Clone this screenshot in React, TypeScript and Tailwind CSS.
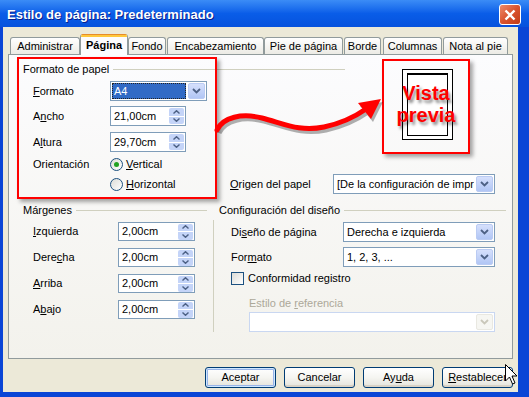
import React from "react";

type Tab = { label: string; cls: string; active?: boolean };

const tabs: Tab[] = [
  { label: "Administrar", cls: "w-[70px]" },
  { label: "Página", cls: "w-[48px]", active: true },
  { label: "Fondo", cls: "w-[38px]" },
  { label: "Encabezamiento", cls: "w-[97px] ml-[1px]" },
  { label: "Pie de página", cls: "w-[79px]" },
  { label: "Borde", cls: "w-[37px] ml-[1px]" },
  { label: "Columnas", cls: "w-[59px] ml-[2px]" },
  { label: "Nota al pie", cls: "w-[65px] ml-[1px]" },
];

const margins: React.ReactNode[] = [
  <>
    <u>I</u>zquierda
  </>,
  <>
    Dere<u>c</u>ha
  </>,
  <>
    <u>A</u>rriba
  </>,
  <>
    A<u>b</u>ajo
  </>,
];

const Chevron = ({ disabled }: { disabled?: boolean }) => (
  <svg width="9" height="6" viewBox="0 0 9 6">
    <path
      d="M1 1L4.5 4.5L8 1"
      fill="none"
      stroke={disabled ? "#C9C7BA" : "#4D6185"}
      strokeWidth="1.8"
    />
  </svg>
);

const DropButton = ({ disabled }: { disabled?: boolean }) => (
  <div
    className={
      disabled
        ? "w-[17px] h-[16px] rounded-[2px] border border-[#E9E8E1] bg-[#F6F6F2] flex items-center justify-center"
        : "w-[17px] h-[16px] rounded-[2px] border border-[#BACBF3] bg-gradient-to-b from-[#D6E0FC] to-[#B1C6F5] flex items-center justify-center"
    }
  >
    <Chevron disabled={disabled} />
  </div>
);

const Select = ({
  children,
  className,
  selected,
  disabled,
}: {
  children?: React.ReactNode;
  className: string;
  selected?: boolean;
  disabled?: boolean;
}) => (
  <div
    className={`h-[20px] border bg-white flex items-center p-px ${
      disabled ? "border-[#C9D7F1]" : "border-[#7F9DB9]"
    } ${className}`}
  >
    <div
      className={`flex-1 h-full flex items-center pl-[2px] mr-[2px] overflow-hidden whitespace-nowrap ${
        selected ? "bg-[#316AC5] text-white outline-1 outline-dotted outline-[#222] -outline-offset-1" : ""
      }`}
    >
      {children}
    </div>
    <DropButton disabled={disabled} />
  </div>
);

const SpinField = ({ value, className }: { value: string; className: string }) => (
  <div className={`border border-[#7F9DB9] bg-white flex items-center pl-[3px] pr-px ${className}`}>
    <span className="flex-1">{value}</span>
    <div className="w-[15px] h-[16px] flex flex-col gap-px">
      <div className="flex-1 rounded-t-[2px] bg-[#C4D4F8] flex items-center justify-center">
        <svg width="7" height="4" viewBox="0 0 7 4">
          <path d="M0.5 3.5L3.5 0.7L6.5 3.5" fill="none" stroke="#4D6185" strokeWidth="1.4" />
        </svg>
      </div>
      <div className="flex-1 rounded-b-[2px] bg-[#C4D4F8] flex items-center justify-center">
        <svg width="7" height="4" viewBox="0 0 7 4">
          <path d="M0.5 0.5L3.5 3.3L6.5 0.5" fill="none" stroke="#4D6185" strokeWidth="1.4" />
        </svg>
      </div>
    </div>
  </div>
);

const Radio = ({ checked }: { checked?: boolean }) => (
  <span className="w-[13px] h-[13px] rounded-full border border-[#1C5180] bg-gradient-to-br from-[#DCDCD7] to-white flex items-center justify-center">
    {checked && <span className="w-[5px] h-[5px] rounded-full bg-[#21A121]" />}
  </span>
);

const GroupTitle = ({ title }: { title: string }) => (
  <div className="flex items-center h-[14px]">
    <span>{title}</span>
    <div className="flex-1 ml-[4px] h-px bg-[#D0D0BF]" />
  </div>
);

const XpButton = ({ children, isDefault }: { children: React.ReactNode; isDefault?: boolean }) => (
  <div
    className={`w-[71px] h-[21px] rounded-[3px] border border-[#003C74] bg-gradient-to-b from-white via-[#F5F5F1] to-[#E4E3DB] flex items-center justify-center ${
      isDefault
        ? "shadow-[inset_0_0_0_1px_#CEE7FF,inset_0_0_0_2px_#98B4E8]"
        : "shadow-[inset_0_-2px_0_#D8D2C6]"
    }`}
  >
    <span>{children}</span>
  </div>
);

export default function App() {
  return (
    <div className="relative w-[529px] h-[397px] overflow-hidden bg-[#0A45D6] flex flex-col font-['Liberation_Sans',Arial,sans-serif] text-[11px] leading-[13px] text-black">
      {/* title bar */}
      <div className="h-[27px] shrink-0 flex items-center pt-[2px] pl-[7px] pr-[8px] bg-gradient-to-b from-[#3B8CF6] via-[#0A5DE8] to-[#0652DD]">
        <span className="text-white font-bold text-[13px] [text-shadow:1px_1px_0_#0A1E8C]">
          Estilo de página: Predeterminado
        </span>
        <div className="ml-auto w-[22px] h-[21px] rounded-[3px] border border-white bg-gradient-to-br from-[#EC8A6A] via-[#D9532E] to-[#C23B15] flex items-center justify-center">
          <svg width="12" height="12" viewBox="0 0 12 12">
            <path d="M1.5 1.5L10.5 10.5M10.5 1.5L1.5 10.5" stroke="white" strokeWidth="2.4" />
          </svg>
        </div>
      </div>

      {/* frame + body */}
      <div className="flex-1 flex pl-[3px] pr-[11px] pb-[5px]">
        <div className="flex-1 bg-[#ECE9D8] pt-[7px] px-[5px] flex flex-col">
          {/* tabs */}
          <div className="ml-[2px] h-[20px] flex items-end">
            {tabs.map((t) =>
              t.active ? (
                <div
                  key={t.label}
                  className={`relative z-10 -mb-px h-[21px] flex flex-col border-x border-[#919B9C] bg-[#FCFCFE] rounded-t-[3px] overflow-hidden ${t.cls}`}
                >
                  <div className="h-[3px] bg-[#FFC83C] border-t border-[#E68B2C]" />
                  <div className="flex-1 flex items-center justify-center pb-[1px] font-bold">{t.label}</div>
                </div>
              ) : (
                <div
                  key={t.label}
                  className={`h-[17px] flex items-center justify-center border border-b-0 border-[#919B9C] rounded-t-[3px] bg-gradient-to-b from-white to-[#ECEBE5] ${t.cls}`}
                >
                  {t.label}
                </div>
              )
            )}
          </div>

          {/* panel */}
          <div className="w-[505px] h-[305px] border border-[#919B9C] bg-gradient-to-b from-[#FCFCFE] to-[#F3F2EC] pt-[7px] pl-[14px]">
            {/* paper format + preview */}
            <div className="flex">
              <div className="w-[322px]">
                <GroupTitle title="Formato de papel" />
                <div className="mt-[5px] h-[20px] flex items-center">
                  <span className="w-[87px] pl-[10px]">
                    <u>F</u>ormato
                  </span>
                  <Select className="w-[97px]" selected>
                    A4
                  </Select>
                </div>
                <div className="mt-[5px] h-[20px] flex items-center">
                  <span className="w-[87px] pl-[10px]">
                    A<u>n</u>cho
                  </span>
                  <SpinField value="21,00cm" className="w-[76px] h-[20px]" />
                </div>
                <div className="mt-[6px] h-[20px] flex items-center">
                  <span className="w-[87px] pl-[10px]">
                    A<u>l</u>tura
                  </span>
                  <SpinField value="29,70cm" className="w-[76px] h-[20px]" />
                </div>
                <div className="mt-[2px] h-[20px] flex items-center">
                  <span className="w-[87px] pl-[10px]">Orientación</span>
                  <Radio checked />
                  <span className="ml-[3px]">
                    <u>V</u>ertical
                  </span>
                </div>
              </div>
              {/* page preview */}
              <div className="ml-[57px] mt-[7px] w-[51px] h-[71px] border border-black bg-white pt-[3px] px-[4px] pb-[3px]">
                <div className="w-full h-full border border-black border-t-2" />
              </div>
            </div>

            {/* horizontal + paper tray */}
            <div className="h-[20px] flex items-center">
              <div className="w-[87px]" />
              <div className="w-[120px] flex items-center">
                <Radio />
                <span className="ml-[3px]">
                  <u>H</u>orizontal
                </span>
              </div>
              <span className="w-[103px]">
                <u>O</u>rigen del papel
              </span>
              <Select className="w-[162px]">[De la configuración de impre:</Select>
            </div>

            {/* margins + layout */}
            <div className="mt-[9px] flex">
              <div className="w-[184px]">
                <GroupTitle title="Márgenes" />
                {margins.map((label, i) => (
                  <div key={i} className={`h-[19px] flex items-center ${i === 0 ? "mt-[5px]" : "mt-[7px]"}`}>
                    <span className="w-[95px] pl-[10px]">{label}</span>
                    <SpinField value="2,00cm" className="w-[77px] h-[19px]" />
                  </div>
                ))}
              </div>
              <div className="w-[12px]">
                <div className="ml-[6px] mt-[17px] w-px h-[112px] bg-[#D0D0BF]" />
              </div>
              <div className="w-[287px]">
                <GroupTitle title="Configuración del diseño" />
                <div className="pl-[12px]">
                  <div className="mt-[5px] h-[20px] flex items-center">
                    <span className="w-[112px]">
                      Di<u>s</u>eño de página
                    </span>
                    <Select className="w-[152px]">Derecha e izquierda</Select>
                  </div>
                  <div className="mt-[5px] h-[20px] flex items-center">
                    <span className="w-[112px]">
                      For<u>m</u>ato
                    </span>
                    <Select className="w-[152px]">1, 2, 3, ...</Select>
                  </div>
                  <div className="mt-[4px] h-[15px] flex items-center">
                    <span className="w-[13px] h-[13px] border border-[#1C5180] bg-gradient-to-br from-[#DCDCD7] to-white" />
                    <span className="ml-[4px]">Conformidad registro</span>
                  </div>
                  <div className="ml-[18px] mt-[10px] h-[14px] flex items-center text-[#ACA899]">
                    <span>
                      Estilo de <u>r</u>eferencia
                    </span>
                  </div>
                  <div className="ml-[18px] mt-[2px]">
                    <Select className="w-[246px]" disabled />
                  </div>
                </div>
              </div>
            </div>
          </div>

          {/* buttons */}
          <div className="mt-[8px] flex justify-end gap-[8px]">
            <XpButton isDefault>Aceptar</XpButton>
            <XpButton>Cancelar</XpButton>
            <XpButton>
              Ay<u>u</u>da
            </XpButton>
            <XpButton>
              <u>R</u>establecer
            </XpButton>
          </div>
        </div>
      </div>

      {/* red annotation boxes */}
      <div className="absolute left-[17px] top-[57px] w-[200px] h-[142px] border-2 border-[#FF0000] shadow-[3px_3px_4px_rgba(0,0,0,0.35)] pointer-events-none" />
      <div className="absolute left-[382px] top-[59px] w-[88px] h-[95px] border-2 border-[#FF0000] shadow-[3px_3px_4px_rgba(0,0,0,0.35)] pointer-events-none">
        <div className="pt-[21px] text-center text-[20px] leading-[22px] font-bold text-[#FF0000] [text-shadow:2px_3px_3px_rgba(0,0,0,0.45)]">
          Vista
          <br />
          previa
        </div>
      </div>

      {/* curved arrow */}
      <svg
        className="absolute left-[210px] top-[90px] pointer-events-none"
        width="180"
        height="50"
        viewBox="210 90 180 50"
      >
        <g transform="translate(2 3)" opacity="0.3">
          <path
            d="M217 130C223 117 242 113 262 118C285 124 300 132 324 127C343 123 356 116 366 109"
            fill="none"
            stroke="#000"
            strokeWidth="5"
          />
          <path d="M381 99L358 103L371 119Z" fill="#000" />
        </g>
        <path
          d="M217 130C223 117 242 113 262 118C285 124 300 132 324 127C343 123 356 116 366 109"
          fill="none"
          stroke="#FF0000"
          strokeWidth="5"
          strokeLinecap="round"
        />
        <path d="M381 99L358 103L371 119Z" fill="#FF0000" />
      </svg>

      {/* mouse cursor */}
      <svg className="absolute left-[505px] top-[364px] pointer-events-none" width="13" height="21" viewBox="0 0 13 21">
        <path d="M0.5 0.5L0.5 17L4.5 13L7.5 20L10 19L7 12L12 12Z" fill="white" stroke="black" strokeWidth="1" />
      </svg>
    </div>
  );
}
